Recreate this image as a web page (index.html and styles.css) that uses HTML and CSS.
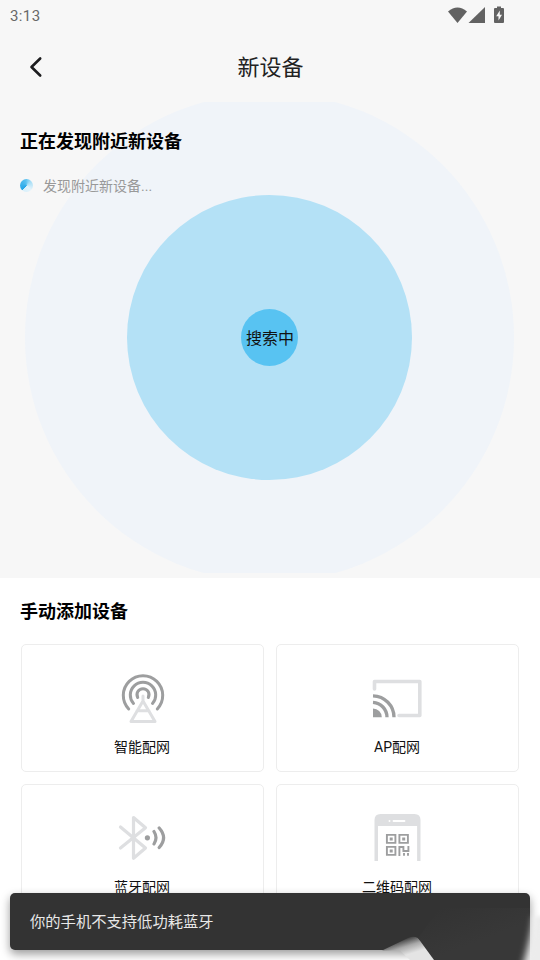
FILE: index.html
```html
<!DOCTYPE html>
<html lang="zh-CN">
<head>
<meta charset="utf-8">
<title>新设备</title>
<link rel="stylesheet" href="styles.css">
</head>
<body>
<div class="screen">
  <div class="status">
    <span class="time">3:13</span>
    <svg class="status-icons" width="58" height="20" viewBox="0 0 58 20" fill="#626262">
      <path d="M0 6.500Q9.500-1.500 19 6.500L9.500 18Z"/>
      <path d="M37 2V18H20.500Z"/>
      <path d="M49 3V1.500h4V3h2q1 0 1 1v13q0 1-1 1h-8q-1 0-1-1V4q0-1 1-1Z"/>
      <path d="M51.800 5.500v4.300h2.200L50.500 15.500v-4.200h-2.300Z" fill="#f7f7f7"/>
    </svg>
  </div>
  <header class="header">
    <svg class="back" width="16" height="24" viewBox="-0.500 0 16 24" fill="none" stroke="#1d1d1f" stroke-width="2.600" stroke-linecap="round" stroke-linejoin="round"><path d="M12.700 3.500L4 12l8.700 8.500"/></svg>
    <h1>新设备</h1>
  </header>
  <section class="discover">
    <div class="radar"><div class="wave"></div><div class="ring"><div class="core">搜索中</div></div></div>
    <div class="intro">
      <h2>正在发现附近新设备</h2>
      <div class="finding"><i class="spinner"></i><span>发现附近新设备...</span></div>
    </div>
  </section>
  <section class="manual">
    <h2>手动添加设备</h2>
    <div class="grid">
      <div class="card">
        <svg width="54" height="54" viewBox="0 -1 54 54" fill="none" stroke-width="3" stroke-linecap="round" stroke-linejoin="round">
          <g stroke="#9d9e9f"><path d="M12.700 37A19.700 19.700 0 1 1 41.300 37"/><path d="M17.500 31.500A12.700 12.700 0 1 1 36.500 31.500"/><path d="M21.700 25.500A6 6 0 1 1 32.300 25.500"/></g>
          <path d="M27 24v5L15 49.500h24L27 29M21 38.800h12" stroke="#dedfe1"/>
        </svg>
        <span>智能配网</span>
      </div>
      <div class="card">
        <svg width="54" height="54" viewBox="1 -2 54 54" fill="none">
          <path d="M4.500 16V8.500h45.300v34H29" stroke="#dedfe1" stroke-width="3.600" stroke-linecap="round" stroke-linejoin="round"/>
          <path d="M3 35.500A8.800 8.800 0 0 1 11.800 44.200H3Z" fill="#9d9e9f"/>
          <path d="M3 29.300A15 15 0 0 1 17 44.200M3 22.800A21.500 21.500 0 0 1 24 44.200" stroke="#9d9e9f" stroke-width="3.300"/>
        </svg>
        <span>AP配网</span>
      </div>
      <div class="card">
        <svg width="54" height="54" viewBox="0 0 54 54" fill="none" stroke-width="3.200" stroke-linecap="round" stroke-linejoin="round">
          <path d="M4.500 16L29.500 37 17.500 47.300V6.500L29.500 16.800 4.500 37" stroke="#dedfe1"/>
          <circle cx="31.400" cy="26.800" r="2.600" fill="#9d9e9f"/>
          <path d="M38 20.500Q42 26.800 38 33M43.200 17Q52 26.800 43.200 36.500" stroke="#9d9e9f"/>
        </svg>
        <span>蓝牙配网</span>
      </div>
      <div class="card">
        <svg width="54" height="54" viewBox="1 -1 54 54">
          <path d="M4.500 49V8q0-6 6-6h34q6 0 6 6v41h-3.400V14H8v35Z" fill="#dedfe1"/>
          <path d="M23.500 9h11" stroke="#fff" stroke-width="1.800" stroke-linecap="round"/><circle cx="19.500" cy="9" r="1" fill="#fff"/>
          <g fill="none" stroke="#9d9e9f" stroke-width="1.900"><path d="M16.900 22.900h8.500v8h-8.500zM29.400 22.900h8.500v8h-8.500zM16.900 34.900h8.500v8h-8.500z"/><path d="M29.400 44V35h4v4h5V34M34 43.800V41M38 43.800V41"/></g>
          <path d="M19.700 25.500h3v3h-3zM32.200 25.500h3v3h-3zM19.700 37.500h3v3h-3z" fill="#9d9e9f"/>
        </svg>
        <span>二维码配网</span>
      </div>
    </div>
  </section>
  <div class="toast">你的手机不支持低功耗蓝牙</div>
  <svg class="smudge" width="160" height="60" viewBox="0 0 160 60">
    <defs>
      <linearGradient id="fold" gradientUnits="userSpaceOnUse" x1="28" y1="37" x2="33" y2="53"><stop offset="0" stop-color="#363636"/><stop offset=".5" stop-color="#a8a8a8"/><stop offset="1" stop-color="#e4e4e4"/></linearGradient>
      <linearGradient id="sheet" gradientUnits="userSpaceOnUse" x1="60" y1="8" x2="76" y2="50"><stop offset="0" stop-color="#333"/><stop offset="1" stop-color="#383838"/></linearGradient>
      <filter id="soft" x="-100%" y="-20%" width="300%" height="140%"><feGaussianBlur stdDeviation="3.500 2"/></filter>
    </defs>
    <path d="M2 50.500L28 38Q36 34 42 42L54 60H30L20 50.500Z" fill="url(#fold)"/>
    <path d="M38 38L54 60H150V8H60Z" fill="url(#sheet)"/>
    <path d="M154 16Q150 42 141 72H176V16Z" fill="#ececec" filter="url(#soft)"/>
  </svg>
</div>
</body>
</html>
```
FILE: styles.css
```css
* { box-sizing: border-box; }
body { margin: 0; font-family: Roboto, "Noto Sans CJK SC", sans-serif; color: #000; }
.screen { position: relative; width: 540px; height: 960px; overflow: hidden; background: #f7f7f7; }
.status { height: 32px; display: flex; align-items: center; justify-content: space-between; padding: 0 34px 0 10px; }
.time { font-size: 15px; line-height: 20px; letter-spacing: .4px; color: #686868; }
.status-icons { margin-top: -2px; }
.header { height: 70px; display: grid; grid-template-columns: 40px 1fr 40px; align-items: center; padding: 0 16px 0 27px; }
h1 { margin: 2px 10px 0 0; text-align: center; font-size: 22px; line-height: 32px; font-weight: 400; color: #222; }
.discover { position: relative; height: 476px; }
.radar { position: absolute; inset: 0 0 5px; overflow: hidden; display: grid; grid-template: 100% / 100%; place-items: center; padding-right: 1px; }
.radar > * { grid-area: 1 / 1; border-radius: 50%; }
.wave { width: 489px; height: 489px; background: #f0f4f9; }
.ring { width: 285px; height: 285px; background: #b4e1f6; display: grid; place-items: center; }
.core { width: 57px; height: 57px; border-radius: 50%; background: #58c3f2; display: grid; place-items: center; font-size: 16px; white-space: nowrap; color: #111; padding: 0 0 2px 1px; }
.intro { position: relative; padding: 27px 20px 0; }
h2 { margin: 0; font-size: 18px; line-height: 26px; font-weight: 700; }
.finding { margin-top: 21px; display: flex; align-items: center; gap: 10px; font-size: 14px; line-height: 20px; color: #999; }
.spinner { width: 13px; height: 13px; margin-top: -2px; border-radius: 50%; background: conic-gradient(from 225deg, #25a6e8, #58c0f0 35%, #a5ddf6 50%, #e3f3fb 75%, #d5effb); }
.manual { height: 382px; background: #fff; padding: 21px 21px 0; }
.manual h2 { margin-left: -1px; }
.grid { margin-top: 19px; display: grid; grid-template-columns: 243px 243px; gap: 12px; grid-auto-rows: 128px; }
.card { border: 1px solid #ededed; border-radius: 5px; display: flex; flex-direction: column; align-items: center; padding: 26px 1px 0 0; font-size: 14px; line-height: 20px; color: #111; }
.card span { margin-top: 12px; }
.card svg { margin-left: 1px; }
.toast { position: absolute; left: 10px; top: 893px; width: 520px; height: 57px; border-radius: 5px; background: #333; color: #e8e8e8; font-size: 15.300px; line-height: 59px; padding-left: 20px; box-shadow: 0 4px 10px rgba(0, 0, 0, .4); }
.smudge { position: absolute; left: 380px; top: 900px; }
```
